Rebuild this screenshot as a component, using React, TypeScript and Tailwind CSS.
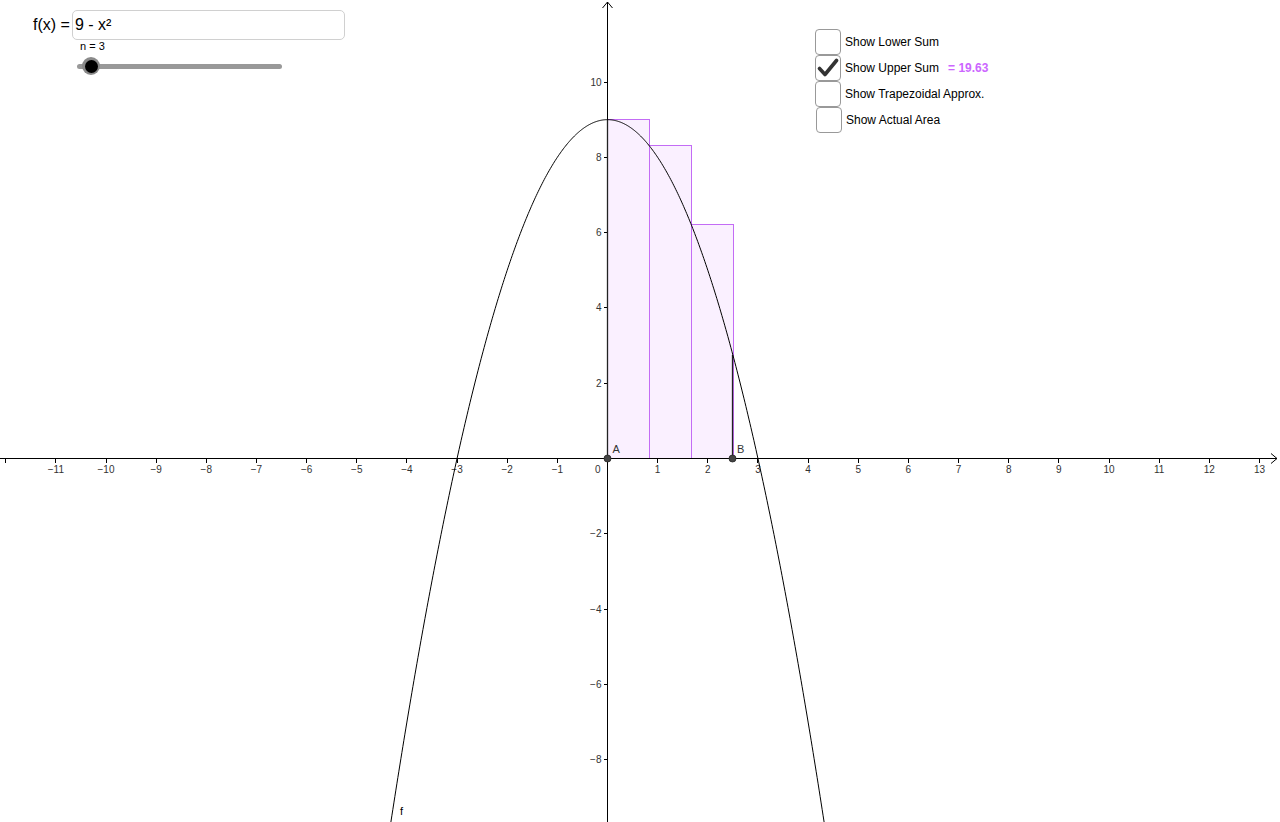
import React from "react";

const W = 1280;
const H = 822;
const OX = 607.5;
const OY = 458.5;
const SX = 50.15;
const SY = 37.65;

const px = (x: number) => OX + x * SX;
const py = (y: number) => OY - y * SY;
const f = (x: number) => 9 - x * x;

const A = 0;
const B = 2.5;
const N = 3;

function Graph() {
  const curve: string[] = [];
  for (let x = -4.5; x <= 4.5; x += 0.02) {
    curve.push(`${px(x).toFixed(2)},${py(f(x)).toFixed(2)}`);
  }

  const dx = (B - A) / N;
  const rects = Array.from({ length: N }, (_, i) => {
    const x0 = A + i * dx;
    return { x: Math.round(px(x0) - 0.5) + 0.5, w: Math.round(dx * SX), top: Math.round(py(f(x0)) - 0.5) + 0.5 };
  });

  const xTicks = Array.from({ length: 26 }, (_, i) => i - 12);
  const yTicks = [10, 8, 6, 4, 2, -2, -4, -6, -8];
  const label = (n: number) => (n < 0 ? `\u2212${-n}` : `${n}`);
  const snap = (v: number) => Math.round(v - 0.5) + 0.5;

  return (
    <svg width={W} height={H} className="block" style={{ fontFamily: '"Liberation Sans", Arial, sans-serif' }}>
      {/* upper sum rectangles */}
      {rects.map((r, i) => (
        <rect
          key={i}
          x={r.x}
          y={r.top}
          width={r.w}
          height={OY - r.top}
          fill="#faf0ff"
          stroke="#c36cf5"
          strokeWidth={1}
        />
      ))}

      {/* axes */}
      <g shapeRendering="crispEdges">
        <line x1={0} y1={OY} x2={1277} y2={OY} stroke="#000" strokeWidth={1} />
        <line x1={OX} y1={2} x2={OX} y2={H} stroke="#000" strokeWidth={1} />
        {xTicks.map((n) =>
          n === 0 ? null : <line key={n} x1={snap(px(n))} y1={OY} x2={snap(px(n))} y2={OY + 4} stroke="#000" strokeWidth={1} />
        )}
        {yTicks.map((n) => (
          <line key={n} x1={OX - 4} y1={snap(py(n))} x2={OX} y2={snap(py(n))} stroke="#000" strokeWidth={1} />
        ))}
      </g>
      <polyline points={`1271,${OY - 5} 1277,${OY} 1271,${OY + 5}`} fill="none" stroke="#000" strokeWidth={1} />
      <polyline points={`${OX - 5},8 ${OX},2 ${OX + 5},8`} fill="none" stroke="#000" strokeWidth={1} />

      {xTicks.map((n) =>
        n === 0 || n === -12 ? null : (
          <text key={n} x={px(n)} y={OY + 14} fontSize={10} fill="#333" textAnchor="middle">
            {label(n)}
          </text>
        )
      )}
      <text x={OX - 7} y={OY + 14} fontSize={10} fill="#333" textAnchor="end">
        0
      </text>

      {yTicks.map((n) => (
        <text key={n} x={OX - 6} y={py(n) + 3.5} fontSize={10} fill="#333" textAnchor="end">
          {label(n)}
        </text>
      ))}

      {/* segments at A and B */}
      <line x1={px(A)} y1={OY} x2={px(A)} y2={py(f(A))} stroke="#222" strokeWidth={1.3} />
      <line x1={snap(px(B))} y1={OY} x2={snap(px(B))} y2={py(f(B))} stroke="#222" strokeWidth={1.3} />

      {/* function */}
      <polyline points={curve.join(" ")} fill="none" stroke="#000" strokeWidth={1} />
      <text x={400} y={815} fontSize={11} fill="#000">
        f
      </text>

      {/* points */}
      <circle cx={px(A)} cy={OY} r={3.5} fill="#444" stroke="#222" strokeWidth={0.8} />
      <circle cx={snap(px(B))} cy={OY} r={3.5} fill="#444" stroke="#222" strokeWidth={0.8} />
      <text x={px(A) + 5} y={OY - 6} fontSize={11} fill="#333">
        A
      </text>
      <text x={px(B) + 4} y={OY - 6} fontSize={11} fill="#333">
        B
      </text>
    </svg>
  );
}

function Check({ checked }: { checked?: boolean }) {
  return (
    <div className="w-[26px] h-[26px] rounded-[4px] border border-[#999] bg-white flex items-center justify-center shrink-0">
      {checked && (
        <svg width="22" height="20" viewBox="0 0 22 20">
          <path d="M2.5 10.5 L8 16.5 L19.5 2.5" fill="none" stroke="#333" strokeWidth="3.6" strokeLinecap="round" strokeLinejoin="round" />
        </svg>
      )}
    </div>
  );
}

export default function App() {
  const rows = [
    { text: "Show Lower Sum", checked: false, shift: "ml-0" },
    { text: "Show Upper Sum", checked: true, shift: "ml-0" },
    { text: "Show Trapezoidal Approx.", checked: false, shift: "ml-0" },
    { text: "Show Actual Area", checked: false, shift: "ml-px" },
  ];

  return (
    <div
      className="relative w-[1280px] h-[822px] bg-white overflow-hidden text-black"
      style={{ fontFamily: '"Liberation Sans", Arial, sans-serif' }}
    >
      <Graph />

      {/* input box */}
      <div className="absolute left-[33px] top-[10px] flex items-center">
        <span className="text-[16px] mr-[2px]">f(x) =</span>
        <div className="w-[273px] h-[30px] border border-[#d0d0d0] rounded-[5px] bg-white flex items-center pl-[2px] text-[16px]">
          9 - x²
        </div>
      </div>

      {/* slider */}
      <div className="absolute left-[77px] top-[39px] w-[205px]">
        <div className="text-[11px] pl-[3px] leading-[14px]">n = 3</div>
        <div className="relative h-[20px] mt-[3px] flex items-center">
          <div className="w-full h-[5px] rounded-full bg-[#999]" />
          <div className="absolute left-[5px] top-[1px] w-[18px] h-[18px] rounded-full bg-[#8a8a8a] flex items-center justify-center">
            <div className="w-[13px] h-[13px] rounded-full bg-black" />
          </div>
        </div>
      </div>

      {/* checkboxes */}
      <div className="absolute left-[815px] top-[29px] flex flex-col">
        {rows.map((r) => (
          <div key={r.text} className={`flex items-center h-[26px] ${r.shift}`}>
            <Check checked={r.checked} />
            <span className="text-[12px] ml-[4px] text-black">{r.text}</span>
            {r.checked && <span className="text-[12px] font-bold text-[#cc66ff] ml-[9px]">= 19.63</span>}
          </div>
        ))}
      </div>
    </div>
  );
}
